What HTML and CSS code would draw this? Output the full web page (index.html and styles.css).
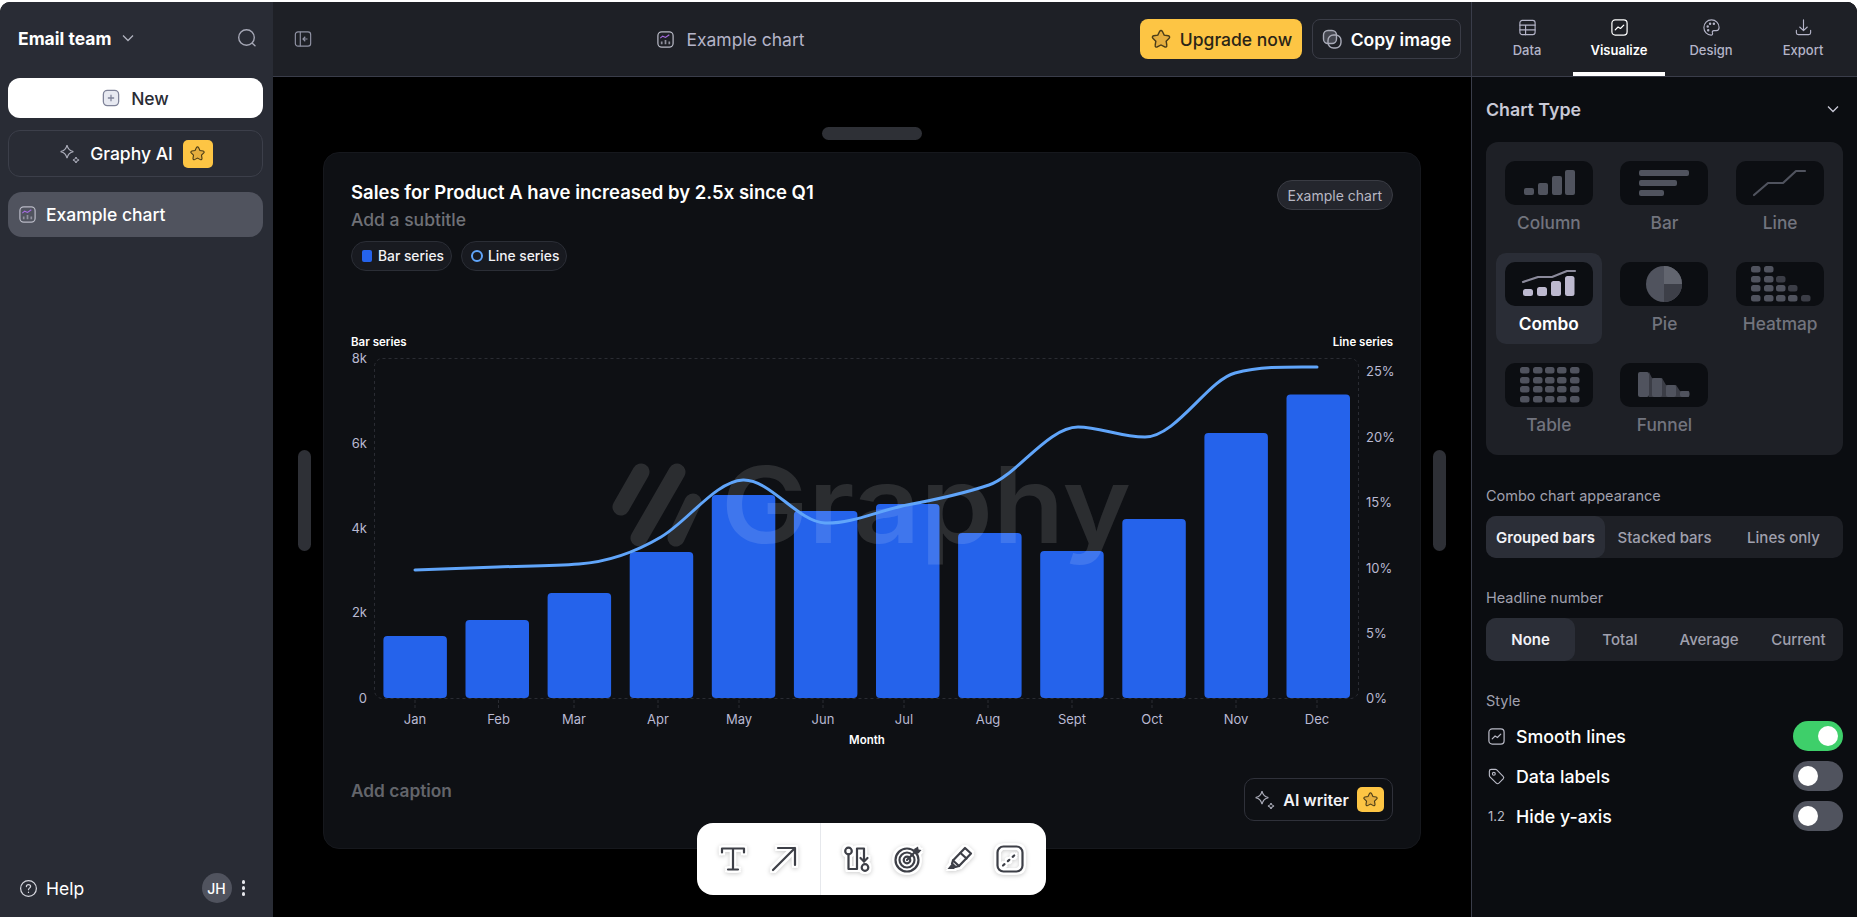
FILE: index.html
```html
<!DOCTYPE html>
<html lang="en">
<head>
  <meta charset="UTF-8" />
  <title>Example chart – Graphy</title>
  <link rel="stylesheet" href="styles.css">
</head>
<body>
  <svg class="defs" width="0" height="0">
    <defs>
      <symbol id="star" viewBox="0 0 20 20"><path d="M10 2.2c.5 0 .9.3 1.2.8l1.7 3.5 3.8.6c1.1.2 1.5 1.5.7 2.2l-2.7 2.7.6 3.8c.2 1.1-1 1.9-1.9 1.4L10 15.4l-3.4 1.800c-1 .5-2.1-.3-1.9-1.4l.6-3.8L2.6 9.3c-.8-.7-.4-2 .7-2.2l3.8-.6L8.8 3c.3-.5.7-.8 1.2-.8z"/></symbol>
      <symbol id="sparkle" viewBox="0 0 20 20"><path d="M7.5 2.5c.6 3.3 1.9 4.7 5.3 5.5-3.4.8-4.7 2.2-5.3 5.5-.6-3.3-1.9-4.7-5.3-5.5 3.4-.8 4.7-2.2 5.3-5.5zM15 12.5c.3 1.5.9 2.1 2.5 2.5-1.6.4-2.2 1-2.5 2.5-.3-1.5-.9-2.1-2.5-2.5 1.6-.4 2.2-1 2.5-2.5z"/></symbol>
      <symbol id="chart-doc" viewBox="0 0 20 20">
        <rect x="2" y="2" width="16" height="16" rx="4" fill="none" stroke="#b9bac6" stroke-width="1.3"/>
        <path d="M4.5 8.5l2.5-2 3 1.3 4-2.8" fill="none" stroke="#a56ae0" stroke-width="1.2"/>
        <path d="M6 15v-3M10 15v-4.5M14 15v-3" fill="none" stroke="#8f909c" stroke-width="1.8"/>
      </symbol>
      <symbol id="line-box" viewBox="0 0 20 20">
        <rect x="2" y="2" width="16" height="16" rx="3.5" fill="none" stroke="currentColor" stroke-width="1.3"/>
        <path d="M5.5 12.5l3-3 2.5 1.5 3.5-3.5" fill="none" stroke="currentColor" stroke-width="1.3" stroke-linecap="round"/>
      </symbol>
    </defs>
  </svg>

  <div class="app">
    <aside class="sidebar">
      <div class="team-row">
        <span class="team-name">Email team</span>
        <svg class="team-chevron" viewBox="0 0 14 14"><path d="M2 4.5l5 5 5-5"/></svg>
        <svg class="team-search" viewBox="0 0 20 20"><circle cx="9.5" cy="9.5" r="7.8"/><path d="M15.3 15.3l2.7 2.5"/></svg>
      </div>
      <button class="new-btn">
        <svg class="new-icon" viewBox="0 0 20 20"><rect x="1.5" y="1.5" width="17" height="17" rx="4.5"/><path d="M10 6.5v7M6.5 10h7"/></svg>
        New
      </button>
      <button class="ai-btn">
        <svg class="sparkle"><use href="#sparkle"/></svg>
        Graphy AI
        <span class="star-badge"><svg class="star"><use href="#star"/></svg></span>
      </button>
      <div class="chart-item">
        <svg class="doc-icon"><use href="#chart-doc"/></svg>
        Example chart
      </div>
      <div class="side-foot">
        <svg class="help-icon" viewBox="0 0 20 20"><circle cx="10" cy="10" r="8.3"/><path d="M7.8 8c0-1.3 1-2.1 2.2-2.1s2.2.8 2.2 2c0 1.700-2.2 1.700-2.2 3.3"/><path d="M10 13.7v.4"/></svg>
        <span class="help-text">Help</span>
        <span class="avatar">JH</span>
        <span class="dots"><i></i><i></i><i></i></span>
      </div>
    </aside>

    <main class="center">
      <div class="topbar">
        <svg class="collapse-icon" viewBox="0 0 20 20"><rect x="1.5" y="2" width="17" height="16" rx="3"/><path d="M7 2v16M15 10H10.5M12.5 7.5L10 10l2.5 2.5"/></svg>
        <div class="doc-title">
          <svg class="doc-icon"><use href="#chart-doc"/></svg>
          Example chart
        </div>
        <div class="top-actions">
          <button class="upgrade-btn"><svg class="star big"><use href="#star"/></svg>Upgrade now</button>
          <button class="copy-btn">
            <svg class="copy-icon" viewBox="0 0 20 20"><rect class="copy-back" x="1.5" y="1.5" width="13" height="13" rx="4.5"/><rect x="6" y="6" width="13" height="13" rx="5.5"/></svg>
            Copy image
          </button>
        </div>
      </div>

      <div class="stage">
        <div class="handle-h"></div>
        <div class="stage-row">
          <div class="handle-v"></div>
          <section class="card">
            <div class="card-head">
              <div>
                <h1 class="chart-title">Sales for Product A have increased by 2.5x since Q1</h1>
                <div class="chart-subtitle">Add a subtitle</div>
                <div class="legend">
                  <span class="chip"><i class="key-bar"></i>Bar series</span>
                  <span class="chip"><i class="key-line"></i>Line series</span>
                </div>
              </div>
              <span class="name-tag">Example chart</span>
            </div>

            <!-- viewBox uses page coordinates so numbers can be read straight off the design -->
            <svg class="plot" viewBox="351 330 1042 425" width="1042" height="425">
              <text class="axis-title" x="351" y="346">Bar series</text>
              <text class="axis-title end" x="1393" y="346">Line series</text>

              <rect class="frame" x="374.5" y="358.5" width="984" height="340" rx="8"/>

              <g class="ticks">
                <path d="M415 700v8M498.5 700v8M574 700v8M658 700v8M739 700v8M823 700v8M904 700v8M988 700v8M1072 700v8M1152 700v8M1236 700v8M1317 700v8"/>
              </g>

              <g class="bars">
                <rect x="383.4" y="636" width="63.5" height="62" rx="4"/>
                <rect x="465.5" y="620" width="63.5" height="78" rx="4"/>
                <rect x="547.6" y="593" width="63.5" height="105" rx="4"/>
                <rect x="629.7" y="552" width="63.5" height="146" rx="4"/>
                <rect x="711.8" y="495" width="63.5" height="203" rx="4"/>
                <rect x="793.9" y="511" width="63.5" height="187" rx="4"/>
                <rect x="876" y="504" width="63.5" height="194" rx="4"/>
                <rect x="958.1" y="533" width="63.5" height="165" rx="4"/>
                <rect x="1040.2" y="551" width="63.5" height="147" rx="4"/>
                <rect x="1122.3" y="519" width="63.5" height="179" rx="4"/>
                <rect x="1204.4" y="433" width="63.5" height="265" rx="4"/>
                <rect x="1286.5" y="394.5" width="63.5" height="303.5" rx="4"/>
              </g>

              <g class="watermark">
                <path class="mark" d="M641 472L621 507M677 472L639 538M693 502L676 538"/>
                <text x="721" y="543" textLength="410" lengthAdjust="spacingAndGlyphs">Graphy</text>
              </g>

              <path class="series-line" d="M415 570C442 569 470 568 497 567C524 566 552 566 579 564C606 562 634 553 661 537C688 521 716 481 743 480C770 479 798 522 825 523C852 524 880 510 907 505C934 500 962 494 989 485C1016 476 1048 427 1078 427C1100 427 1120 437 1145 437C1176 437 1208 380 1235 373C1262 366 1290 367 1317 367"/>

              <g class="axis-left">
                <text x="367" y="363">8k</text>
                <text x="367" y="448">6k</text>
                <text x="367" y="533">4k</text>
                <text x="367" y="617">2k</text>
                <text x="367" y="703">0</text>
              </g>
              <g class="axis-right">
                <text x="1366" y="376">25%</text>
                <text x="1366" y="442">20%</text>
                <text x="1366" y="507">15%</text>
                <text x="1366" y="573">10%</text>
                <text x="1366" y="638">5%</text>
                <text x="1366" y="703">0%</text>
              </g>
              <g class="axis-bottom">
                <text x="415" y="724">Jan</text>
                <text x="498.5" y="724">Feb</text>
                <text x="574" y="724">Mar</text>
                <text x="658" y="724">Apr</text>
                <text x="739" y="724">May</text>
                <text x="823" y="724">Jun</text>
                <text x="904" y="724">Jul</text>
                <text x="988" y="724">Aug</text>
                <text x="1072" y="724">Sept</text>
                <text x="1152" y="724">Oct</text>
                <text x="1236" y="724">Nov</text>
                <text x="1317" y="724">Dec</text>
              </g>
              <text class="axis-title mid" x="867" y="744">Month</text>
            </svg>

            <div class="card-foot">
              <span class="caption">Add caption</span>
              <button class="writer-btn">
                <svg class="sparkle"><use href="#sparkle"/></svg>
                AI writer
                <span class="star-badge"><svg class="star"><use href="#star"/></svg></span>
              </button>
            </div>
          </section>
          <div class="handle-v"></div>
        </div>

        <div class="toolbar">
          <div class="tool-group first">
            <svg class="tool" viewBox="0 0 28 28"><path d="M3 7.5V3.5h22v4M14 3.5v21M9 24.5h10"/></svg>
            <svg class="tool" viewBox="0 0 28 28"><path d="M3 25L25 3M8 3h17v17"/></svg>
          </div>
          <div class="tool-group">
            <svg class="tool" viewBox="0 0 28 28"><circle cx="5.5" cy="6" r="3.3"/><path d="M5.5 9.3V24h8.5V3.5h7v13"/><path d="M17.5 13l3.5 3.5 3.5-3.5"/><circle cx="22" cy="22.5" r="3.3"/></svg>
            <svg class="tool" viewBox="0 0 28 28"><circle cx="13" cy="15" r="11.5"/><circle cx="13" cy="15" r="7.5"/><circle cx="13" cy="15" r="3.3"/><path d="M13 15L23 5"/><path class="solid" d="M20 4l4-2.5.6 2.9 2.9.6-3 3.5-3.5-.5z"/></svg>
            <svg class="tool" viewBox="0 0 28 28"><path d="M8 15.5L20 3l6 5.5L14 21z"/><path d="M15.5 8l6 5.5"/><path d="M8 15.5l-1 3 3.5 3.5 3.5-1"/><path class="solid" d="M6.5 19l4 3.5-1.5 1.5H2.5z"/></svg>
            <svg class="tool" viewBox="0 0 28 28"><rect x="1.5" y="1.5" width="25" height="25" rx="6"/><path class="dashes" d="M7 20.5L21 8"/></svg>
          </div>
        </div>
      </div>
    </main>

    <aside class="panel">
      <nav class="tabs">
        <a class="tab">
          <svg viewBox="0 0 20 20"><rect x="2" y="2.5" width="16" height="15" rx="2.5"/><path d="M2 7.5h16M2 12.5h16M8 7.5v10"/></svg>
          Data
        </a>
        <a class="tab active">
          <svg><use href="#line-box"/></svg>
          Visualize
        </a>
        <a class="tab">
          <svg viewBox="0 0 20 20"><path d="M10 2C5.5 2 2 5.5 2 10s3.5 8 7.5 8c1.5 0 2-1 1.5-2.2-.6-1.3.2-2.5 1.5-2.5H15c1.8 0 3-1.3 3-3.3C18 5.5 14.5 2 10 2z"/><circle cx="6" cy="9" r=".7"/><circle cx="8.5" cy="6" r=".7"/><circle cx="12.5" cy="6" r=".7"/><circle cx="6.5" cy="13" r=".7"/></svg>
          Design
        </a>
        <a class="tab">
          <svg viewBox="0 0 20 20"><path d="M10 2v11M6 9.5l4 3.8 4-3.8M2.5 13v2.5c0 1.200 1 2 2 2h11c1 0 2-.8 2-2V13"/></svg>
          Export
        </a>
      </nav>

      <div class="panel-body">
        <div class="panel-head">
          <span>Chart Type</span>
          <svg class="panel-chevron" viewBox="0 0 14 14"><path d="M2 4.5l5 5 5-5"/></svg>
        </div>

        <div class="type-grid">
          <div class="type">
            <svg class="thumb" viewBox="0 0 88 44"><rect x="19" y="27" width="10" height="7" rx="2"/><rect x="33" y="22" width="10" height="12" rx="2"/><rect x="47" y="15" width="10" height="19" rx="2"/><rect x="60" y="9" width="10" height="25" rx="2"/></svg>
            Column
          </div>
          <div class="type">
            <svg class="thumb" viewBox="0 0 88 44"><rect x="19" y="9" width="50" height="6" rx="2"/><rect x="19" y="19" width="38" height="6" rx="2"/><rect x="19" y="29" width="25" height="6" rx="2"/></svg>
            Bar
          </div>
          <div class="type">
            <svg class="thumb" viewBox="0 0 88 44"><path class="thumb-line" d="M18 34l14-12h15l13-12h9"/></svg>
            Line
          </div>
          <div class="type selected">
            <svg class="thumb" viewBox="0 0 88 44"><path class="thumb-line" d="M18 20l15-5h14l15-6h8"/><rect x="18" y="27" width="10" height="7" rx="2.5"/><rect x="32" y="25" width="10" height="9" rx="2.5"/><rect x="46" y="19" width="10" height="15" rx="2.5"/><rect x="60" y="14" width="9.5" height="20" rx="2.5"/></svg>
            Combo
          </div>
          <div class="type">
            <svg class="thumb" viewBox="0 0 88 44"><circle cx="44" cy="22" r="18"/><path class="pie-a" d="M44 22V4a18 18 0 0 1 18 18z"/><path class="pie-b" d="M44 22h18a18 18 0 0 1-18 18z"/></svg>
            Pie
          </div>
          <div class="type">
            <svg class="thumb" viewBox="0 0 88 44">
              <rect x="15" y="4" width="9.5" height="6.5" rx="2.5"/><rect x="28" y="4" width="9.5" height="6.5" rx="2.5"/>
              <rect x="15" y="14" width="9.5" height="6.5" rx="2.5"/><rect x="28" y="14" width="9.5" height="6.5" rx="2.5"/><rect class="dim" x="40" y="14" width="9.5" height="6.5" rx="2.5"/>
              <rect x="15" y="23" width="9.5" height="6.5" rx="2.5"/><rect x="28" y="23" width="9.5" height="6.5" rx="2.5"/><rect x="40" y="23" width="9.5" height="6.5" rx="2.5"/><rect class="dim" x="52" y="23" width="9.5" height="6.5" rx="2.5"/>
              <rect x="15" y="33" width="9.5" height="6.5" rx="2.5"/><rect x="28" y="33" width="9.5" height="6.5" rx="2.5"/><rect x="40" y="33" width="9.5" height="6.5" rx="2.5"/><rect x="52" y="33" width="9.5" height="6.5" rx="2.5"/><rect class="dim" x="65" y="33" width="9.5" height="6.5" rx="2.5"/>
            </svg>
            Heatmap
          </div>
          <div class="type">
            <svg class="thumb" viewBox="0 0 88 44">
              <rect x="15" y="4" width="9.5" height="6.5" rx="2.5"/><rect x="28" y="4" width="9.5" height="6.5" rx="2.5"/><rect x="40" y="4" width="9.5" height="6.5" rx="2.5"/><rect x="52" y="4" width="9.5" height="6.5" rx="2.5"/><rect x="65" y="4" width="9.5" height="6.5" rx="2.5"/>
              <rect x="15" y="14" width="9.5" height="6.5" rx="2.5"/><rect x="28" y="14" width="9.5" height="6.5" rx="2.5"/><rect x="40" y="14" width="9.5" height="6.5" rx="2.5"/><rect x="52" y="14" width="9.5" height="6.5" rx="2.5"/><rect x="65" y="14" width="9.5" height="6.5" rx="2.5"/>
              <rect x="15" y="23" width="9.5" height="6.5" rx="2.5"/><rect x="28" y="23" width="9.5" height="6.5" rx="2.5"/><rect x="40" y="23" width="9.5" height="6.5" rx="2.5"/><rect x="52" y="23" width="9.5" height="6.5" rx="2.5"/><rect x="65" y="23" width="9.5" height="6.5" rx="2.5"/>
              <rect x="15" y="33" width="9.5" height="6.5" rx="2.5"/><rect x="28" y="33" width="9.5" height="6.5" rx="2.5"/><rect x="40" y="33" width="9.5" height="6.5" rx="2.5"/><rect x="52" y="33" width="9.5" height="6.5" rx="2.5"/><rect x="65" y="33" width="9.5" height="6.5" rx="2.5"/>
            </svg>
            Table
          </div>
          <div class="type">
            <svg class="thumb" viewBox="0 0 88 44"><path class="dim" d="M29 9l3 6h10l4 7h10l4 6h9v6H29z"/><rect x="18" y="9" width="11" height="25" rx="2"/><rect x="32" y="15" width="10" height="19" rx="2"/><rect x="46" y="22" width="10" height="12" rx="2"/><rect x="60" y="28" width="9.5" height="6" rx="2"/></svg>
            Funnel
          </div>
        </div>

        <div class="field-label first">Combo chart appearance</div>
        <div class="segments">
          <span class="seg on">Grouped bars</span>
          <span class="seg">Stacked bars</span>
          <span class="seg">Lines only</span>
        </div>

        <div class="field-label">Headline number</div>
        <div class="segments tall">
          <span class="seg on">None</span>
          <span class="seg">Total</span>
          <span class="seg">Average</span>
          <span class="seg">Current</span>
        </div>

        <div class="field-label">Style</div>
        <div class="style-rows">
          <div class="style-row">
            <svg class="row-icon"><use href="#line-box"/></svg>
            <span class="row-label">Smooth lines</span>
            <span class="toggle on"></span>
          </div>
          <div class="style-row">
            <svg class="row-icon" viewBox="0 0 20 20"><path d="M2.5 4.5c0-1.2.9-2 2-2h4.3c.6 0 1.1.2 1.5.6l6.700 6.700c.7.7.7 1.900 0 2.700l-4.500 4.500c-.8.7-2 .7-2.700 0L3.100 10.300c-.4-.4-.6-.9-.6-1.500z"/><circle cx="7.2" cy="7.2" r="1.5"/></svg>
            <span class="row-label">Data labels</span>
            <span class="toggle"></span>
          </div>
          <div class="style-row">
            <span class="row-num">1.2</span>
            <span class="row-label">Hide y-axis</span>
            <span class="toggle"></span>
          </div>
        </div>
      </div>
    </aside>
  </div>
</body>
</html>
```

FILE: styles.css
```css
* { box-sizing: border-box; margin: 0; padding: 0; }
body {
  font-family: 'Inter', 'Liberation Sans', sans-serif;
  background: #fff;
  padding-top: 2px;
  height: 917px;
  overflow: hidden;
}
button {
  font-family: inherit;
  cursor: pointer;
}
.defs { position: absolute; }
.app {
  display: flex;
  height: 915px;
  border-radius: 10px 10px 0 0;
  overflow: hidden;
  background: #000;
}

/* left sidebar */
.sidebar {
  width: 273px;
  flex: none;
  background: #292c35;
  padding: 0 10px 0 8px;
  display: flex;
  flex-direction: column;
}
.team-row {
  height: 72px;
  display: flex;
  align-items: center;
  padding: 0 6px 0 10px;
  margin-bottom: 4px;
}
.team-name {
  font-size: 17.5px;
  font-weight: 700;
  color: #fff;
}
.team-chevron {
  width: 14px;
  height: 14px;
  margin-left: 10px;
  fill: none;
  stroke: #b0b2be;
  stroke-width: 1.3;
}
.team-search {
  width: 20px;
  height: 20px;
  margin-left: auto;
  fill: none;
  stroke: #a4a6b4;
  stroke-width: 1.4;
  stroke-linecap: round;
}
.new-btn {
  height: 40px;
  border: none;
  border-radius: 12px;
  background: #fff;
  color: #292c35;
  font-size: 17.5px;
  font-weight: 500;
  display: flex;
  align-items: center;
  justify-content: center;
  gap: 11px;
}
.new-icon {
  width: 18px;
  height: 18px;
  fill: #e7e9f1;
  stroke: #7f8399;
  stroke-width: 1.4;
}
.ai-btn {
  height: 47px;
  margin-top: 12px;
  border: 1px solid #3c3f4a;
  border-radius: 12px;
  background: transparent;
  color: #fff;
  font-size: 17.5px;
  font-weight: 500;
  display: flex;
  align-items: center;
  justify-content: center;
  gap: 10px;
}
.sparkle {
  width: 24px;
  height: 24px;
  margin-right: -2px;
  fill: none;
  stroke: #a9abb8;
  stroke-width: 1;
}
.star-badge {
  width: 30px;
  height: 28px;
  background: #fdc544;
  border-radius: 5px;
  display: flex;
  align-items: center;
  justify-content: center;
}
.star {
  width: 17px;
  height: 17px;
  fill: #e5ae3e;
  stroke: #4b3d18;
  stroke-width: 1.3;
}
.star.big {
  width: 22px;
  height: 22px;
}
.chart-item {
  height: 45px;
  margin-top: 15px;
  padding-left: 10px;
  border-radius: 14px;
  background: #50535e;
  color: #fff;
  font-size: 17.5px;
  font-weight: 500;
  display: flex;
  align-items: center;
  gap: 9px;
}
.doc-icon {
  width: 19px;
  height: 19px;
  flex: none;
}
.side-foot {
  margin-top: auto;
  height: 58px;
  display: flex;
  align-items: center;
  padding: 0 0 0 11px;
  color: #fff;
}
.help-icon {
  width: 19px;
  height: 19px;
  fill: none;
  stroke: #d5d6dd;
  stroke-width: 1.3;
  stroke-linecap: round;
}
.help-text {
  margin-left: 8px;
  font-size: 17.5px;
  font-weight: 400;
}
.avatar {
  margin-left: auto;
  width: 30px;
  height: 30px;
  border-radius: 50%;
  background: #50535e;
  font-size: 14px;
  font-weight: 500;
  display: flex;
  align-items: center;
  justify-content: center;
}
.dots {
  margin: 0 18px 0 10px;
  display: flex;
  flex-direction: column;
  gap: 2.5px;
}
.dots i {
  width: 3.5px;
  height: 3.5px;
  border-radius: 50%;
  background: #e4e5ea;
}

/* centre column */
.center {
  flex: 1;
  min-width: 0;
  display: flex;
  flex-direction: column;
}
.topbar {
  height: 75px;
  flex: none;
  background: #1e2026;
  border-bottom: 1px solid #3a3d4a;
  padding: 0 10px 0 21px;
  display: flex;
  align-items: center;
  justify-content: space-between;
}
.collapse-icon {
  width: 18px;
  height: 18px;
  fill: none;
  stroke: #8f91a3;
  stroke-width: 1.3;
}
.doc-title {
  margin-left: 9px;
  display: flex;
  align-items: center;
  gap: 11px;
  color: #b4b4c8;
  font-size: 17.5px;
}
.top-actions {
  display: flex;
  gap: 10px;
}
.upgrade-btn {
  width: 162px;
  height: 40px;
  border: none;
  border-radius: 8px;
  background: #fdc544;
  color: #2a2416;
  font-size: 17.5px;
  font-weight: 500;
  display: flex;
  align-items: center;
  justify-content: center;
  gap: 8px;
}
.copy-btn {
  width: 149px;
  height: 40px;
  border: 1px solid #3a3c46;
  border-radius: 8px;
  background: transparent;
  color: #fff;
  font-size: 17.5px;
  font-weight: 600;
  display: flex;
  align-items: center;
  justify-content: center;
  gap: 9px;
}
.copy-icon {
  width: 20px;
  height: 20px;
  flex: none;
  fill: none;
  stroke: #a9abb8;
  stroke-width: 1.4;
}
.copy-back { fill: #44464f; }
.stage {
  flex: 1;
  position: relative;
  background: #000;
  padding-top: 50px;
  display: flex;
  flex-direction: column;
  align-items: center;
}
.handle-h {
  width: 100px;
  height: 13px;
  border-radius: 7px;
  background: #2e3036;
  margin-bottom: 12px;
}
.stage-row {
  width: 100%;
  height: 697px;
  padding: 0 25px;
  display: flex;
  align-items: center;
  gap: 12px;
}
.handle-v {
  width: 13px;
  height: 101px;
  flex: none;
  border-radius: 7px;
  background: #2e3036;
}
.card {
  flex: 1;
  height: 100%;
  background: #0e1014;
  border: 1px solid #16181d;
  border-radius: 16px;
  padding: 27px 27px 0;
}
.card-head {
  display: flex;
  justify-content: space-between;
  align-items: flex-start;
}
.chart-title {
  font-size: 18.5px;
  line-height: 24px;
  font-weight: 600;
  color: #fff;
}
.chart-subtitle {
  margin-top: 4px;
  font-size: 17.5px;
  line-height: 24px;
  font-weight: 500;
  color: #6f7177;
}
.legend {
  margin-top: 9px;
  display: flex;
  gap: 9px;
}
.chip {
  height: 30px;
  padding: 0 7px 0 10px;
  border: 1px solid #2b2e36;
  border-radius: 15px;
  background: #181a20;
  color: #f2f2f6;
  font-size: 13.8px;
  font-weight: 500;
  display: flex;
  align-items: center;
  gap: 6px;
}
.key-bar {
  width: 10px;
  height: 12px;
  border-radius: 2px;
  background: #2563eb;
}
.key-line {
  width: 12px;
  height: 12px;
  margin: 0 -1px 0 -1px;
  border: 2.5px solid #60a5fa;
  border-radius: 50%;
}
.name-tag {
  height: 30px;
  padding: 0 10px;
  border: 1px solid #3a3c44;
  border-radius: 15px;
  background: #24262d;
  color: #b8b8c4;
  font-size: 14px;
  display: flex;
  align-items: center;
}
.plot {
  display: block;
  margin-top: 59px;
  overflow: visible;
  font-family: 'Inter', 'Liberation Sans', sans-serif;
}
.axis-title {
  font-size: 11.5px;
  font-weight: 600;
  fill: #fff;
}
.axis-title.end { text-anchor: end; }
.axis-title.mid { text-anchor: middle; }
.frame {
  fill: none;
  stroke: #2a2c33;
  stroke-dasharray: 3 3;
}
.ticks path {
  fill: none;
  stroke: #2a2c33;
  stroke-dasharray: 3 2;
}
.bars rect { fill: #2563eb; }
.watermark text {
  font-size: 106px;
  font-weight: 600;
  fill: rgba(255,255,255,0.12);
}
.mark {
  fill: none;
  stroke: rgba(255,255,255,0.12);
  stroke-width: 17;
  stroke-linecap: round;
}
.series-line {
  fill: none;
  stroke: #60a5fa;
  stroke-width: 3;
  stroke-linecap: round;
}
.axis-left text,
.axis-right text,
.axis-bottom text {
  font-size: 13px;
  fill: #b9b9d2;
}
.axis-left text { text-anchor: end; }
.axis-bottom text { text-anchor: middle; }
.card-foot {
  margin-top: 23px;
  display: flex;
  justify-content: space-between;
  align-items: flex-start;
}
.caption {
  font-size: 17.3px;
  line-height: 26px;
  font-weight: 600;
  color: #63656b;
}
.writer-btn {
  width: 149px;
  height: 43px;
  border: 1px solid #2f313a;
  border-radius: 10px;
  background: transparent;
  color: #f2f2f6;
  font-size: 16px;
  font-weight: 600;
  display: flex;
  align-items: center;
  justify-content: center;
  gap: 8px;
}
.writer-btn .star-badge {
  width: 27px;
  height: 25px;
}

/* floating toolbar */
.toolbar {
  position: absolute;
  left: 424px;
  top: 746px;
  width: 349px;
  height: 72px;
  background: #fff;
  border-radius: 16px;
  display: flex;
}
.tool-group {
  display: flex;
  align-items: center;
  gap: 23px;
  padding: 0 22px;
}
.tool-group.first {
  width: 124px;
  gap: 22.5px;
  justify-content: center;
  padding: 0;
  border-right: 1px solid #e6e8ec;
}
.tool {
  width: 28px;
  height: 28px;
  flex: none;
  fill: none;
  stroke: #3d3f47;
  stroke-width: 2.2;
  stroke-linecap: round;
  stroke-linejoin: round;
  filter: drop-shadow(2px 0 0 #fff) drop-shadow(-2px 0 0 #fff) drop-shadow(0 2px 0 #fff) drop-shadow(0 -2px 0 #fff) drop-shadow(0 1px 2px rgba(0,0,0,0.2));
}
.tool .solid {
  fill: #3d3f47;
  stroke: none;
}
.tool .dashes { stroke-dasharray: 2 4.5; }

/* right panel */
.panel {
  width: 386px;
  flex: none;
  background: #0b0d11;
  border-left: 1px solid #3a3d4a;
  display: flex;
  flex-direction: column;
}
.tabs {
  height: 75px;
  flex: none;
  background: #1e2026;
  border-bottom: 1px solid #3a3d4a;
  padding: 0 8px 0 9px;
  display: flex;
}
.tab {
  flex: 1;
  height: 74px;
  padding-top: 16px;
  border-bottom: 4px solid transparent;
  color: #b4b4c8;
  font-size: 13px;
  font-weight: 500;
  display: flex;
  flex-direction: column;
  align-items: center;
  gap: 5px;
}
.tab svg {
  width: 19px;
  height: 19px;
  fill: none;
  stroke: currentColor;
  stroke-width: 1.2;
  stroke-linecap: round;
  stroke-linejoin: round;
}
.tab.active {
  color: #fff;
  font-weight: 600;
  border-bottom-color: #fff;
}
.panel-body {
  flex: 1;
  padding: 20px 14px 0 14px;
}
.panel-head {
  height: 24px;
  margin-bottom: 21px;
  color: #c9c9d6;
  font-size: 17.8px;
  font-weight: 600;
  display: flex;
  align-items: center;
  justify-content: space-between;
}
.panel-chevron {
  width: 14px;
  height: 14px;
  margin-right: 3px;
  fill: none;
  stroke: #c9c9d6;
  stroke-width: 1.3;
}
.type-grid {
  background: #1e2026;
  border-radius: 12px;
  padding: 10px;
  display: grid;
  grid-template-columns: repeat(3, 1fr);
  grid-template-rows: repeat(3, 91px);
  gap: 10px;
}
.type {
  border-radius: 10px;
  padding-top: 9px;
  color: #72747e;
  font-size: 17.3px;
  font-weight: 500;
  display: flex;
  flex-direction: column;
  align-items: center;
  gap: 7px;
}
.thumb {
  width: 88px;
  height: 44px;
  flex: none;
  background: #0c0e12;
  border-radius: 10px;
  fill: #50535e;
}
.thumb .dim { fill: #3b3d46; }
.thumb .pie-a { fill: #62656f; }
.thumb .pie-b { fill: #3d3f48; }
.thumb-line {
  fill: none;
  stroke: #50535e;
  stroke-width: 2.2;
  stroke-linecap: round;
  stroke-linejoin: round;
}
.type.selected {
  background: #2a2d36;
  color: #fff;
  font-weight: 600;
}
.type.selected .thumb { fill: #bdb9cf; }
.type.selected .thumb-line { stroke: #8b8a9b; }
.field-label {
  margin-top: 30px;
  margin-bottom: 10px;
  height: 20px;
  color: #a0a0ae;
  font-size: 14.5px;
  line-height: 20px;
}
.field-label.first { margin-top: 31px; }
.segments {
  height: 42px;
  border-radius: 10px;
  background: #1e2026;
  display: flex;
}
.segments.tall { height: 43px; }
.seg {
  flex: 1;
  border-radius: 10px;
  color: #a0a0ae;
  font-size: 15px;
  font-weight: 500;
  display: flex;
  align-items: center;
  justify-content: center;
}
.seg.on {
  background: #2b2e37;
  color: #f2f2f6;
  font-weight: 600;
}
.style-rows {
  display: flex;
  flex-direction: column;
  gap: 10px;
}
.style-row {
  height: 30px;
  color: #fff;
  display: flex;
  align-items: center;
}
.row-icon {
  width: 19px;
  height: 19px;
  flex: none;
  margin-left: 1px;
  color: #b9bac6;
  fill: none;
  stroke: #b9bac6;
  stroke-width: 1.2;
}
.row-num {
  width: 19px;
  flex: none;
  margin-left: 1px;
  color: #b9bac6;
  font-size: 13px;
  text-align: center;
}
.row-label {
  margin-left: 10px;
  font-size: 17.8px;
  font-weight: 500;
}
.toggle {
  margin-left: auto;
  width: 50px;
  height: 30px;
  padding: 5px;
  border-radius: 15px;
  background: #50535e;
  display: flex;
}
.toggle::after {
  content: "";
  width: 20px;
  height: 20px;
  border-radius: 50%;
  background: #fff;
}
.toggle.on {
  background: #3ecf6a;
  justify-content: flex-end;
}
```
